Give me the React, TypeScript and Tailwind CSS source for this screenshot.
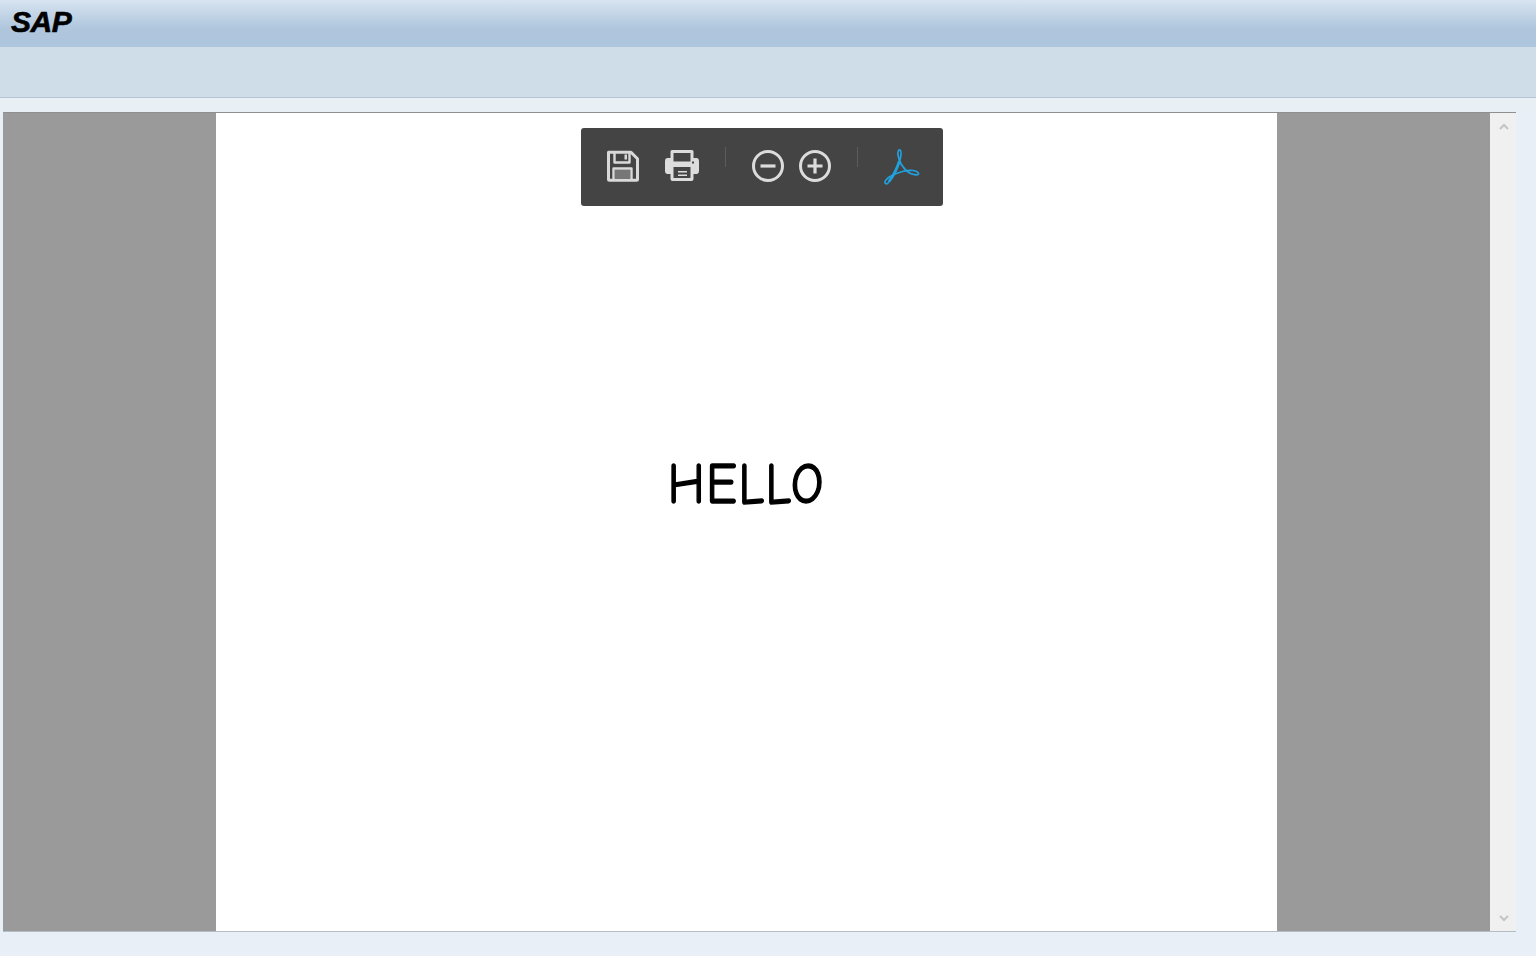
export default function App() {
  return (
    <div className="h-[956px] w-[1536px] overflow-hidden flex flex-col bg-[#e8eff6]" style={{ fontFamily: '"Liberation Sans", sans-serif' }}>
      <header className="h-[47px] shrink-0 flex items-start bg-gradient-to-b from-[#d8e4f0] via-[#afc6dd] via-60% to-[#adc5dd] pl-[11px]">
        <span className="text-[30px] leading-[44px] font-bold italic tracking-[-0.5px] text-black [-webkit-text-stroke:0.6px_black]">SAP</span>
      </header>
      <div className="h-[51px] shrink-0 bg-[#cfdde8] border-b border-[#b4c4d2]" />
      <div className="h-[14px] shrink-0 bg-[#e9f0f5]" />
      <main className="ml-[3px] mr-[20px] h-[820px] flex border-t border-b border-t-[#8f8f8f] border-b-[#b4bcc4] relative">
        <div className="flex-1 flex pl-[213px] bg-[#9a9a9a]">
          <div className="w-[1061px] bg-white flex justify-center relative">
            <span
              className="mt-[337px] h-[70px] text-[51px] leading-[70px] text-black tracking-[1.500px] scale-y-[1.14] [-webkit-text-stroke:1.3px_black]"
              style={{ fontFamily: '"Comic Sans MS", "Comic Neue", "Noto Sans", sans-serif' }}
            >
              HELLO
            </span>
          </div>
        </div>
        <aside className="w-[26px] shrink-0 bg-[#f0f0f0] flex flex-col items-center justify-between pt-[10px] pb-[9px] pl-[1px]">
          <svg width="10" height="8" viewBox="0 0 10 8" fill="none" stroke="#c4c4c4" strokeWidth="2"><path d="M1 6l4-4 4 4" /></svg>
          <svg width="10" height="8" viewBox="0 0 10 8" fill="none" stroke="#c4c4c4" strokeWidth="2"><path d="M1 2l4 4 4-4" /></svg>
        </aside>
        <div className="absolute left-[578px] top-[15px] h-[78px] w-[362px] rounded-[3px] bg-[#444444] flex items-start pt-[21px] pl-[25px]">
          <svg width="34" height="34" viewBox="0 0 34 34" fill="none" stroke="#d9d9d9" strokeWidth="3" strokeLinejoin="round" className="shrink-0">
            <path d="M2.500 3.200h22.500l6.500 6.500v20.500a1 1 0 0 1-1 1h-27a1 1 0 0 1-1-1z" />
            <path d="M8.500 3.500v10h15v-10" strokeWidth="2.400" />
            <rect x="18.500" y="5.500" width="2.500" height="5" fill="#d9d9d9" stroke="none" />
            <path d="M7.500 31v-11.500h18v11.500" strokeWidth="2.400" />
            <rect x="9" y="21" width="15" height="9" fill="#777777" stroke="none" />
          </svg>
          <svg width="36" height="34" viewBox="0 0 36 34" className="ml-[24px] -mt-[1px] shrink-0">
            <path d="M8 2h20a1.500 1.500 0 0 1 1.500 1.500V10h3.500a3 3 0 0 1 2 3v10a3 3 0 0 1-2 3h-3.500v5a2 2 0 0 1-2 2H8.500a2 2 0 0 1-2-2v-5H3a3 3 0 0 1-2-3V13a3 3 0 0 1 2-3h3.500V3.500A1.500 1.500 0 0 1 8 2z" fill="#dcdcdc" />
            <rect x="9.500" y="5" width="17" height="8.500" fill="#444444" />
            <rect x="9.500" y="19" width="17" height="11" fill="#444444" />
            <rect x="14" y="23" width="9" height="1.500" fill="#dcdcdc" />
            <rect x="14" y="26.500" width="9" height="1.500" fill="#dcdcdc" />
            <rect x="28" y="13.500" width="2" height="2" fill="#444444" />
          </svg>
          <div className="ml-[25px] mt-[-2px] w-px h-[20px] bg-[#5c5c5c] shrink-0" />
          <svg width="34" height="34" viewBox="0 0 34 34" fill="none" stroke="#dcdcdc" strokeWidth="3" className="ml-[25px] shrink-0">
            <circle cx="17" cy="17" r="14.500" />
            <path d="M9.500 17h15" strokeWidth="3.200" />
          </svg>
          <svg width="34" height="34" viewBox="0 0 34 34" fill="none" stroke="#dcdcdc" strokeWidth="3" className="ml-[13px] shrink-0">
            <circle cx="17" cy="17" r="14.500" />
            <path d="M9.500 17h15M17 9.500v15" strokeWidth="3.200" />
          </svg>
          <div className="ml-[25px] mt-[-2px] w-px h-[20px] bg-[#5c5c5c] shrink-0" />
          <svg width="38" height="36" viewBox="0 0 38 36" fill="none" stroke="#22a0dc" strokeWidth="1.700" strokeLinejoin="round" className="ml-[24px] shrink-0">
            <path d="M3.500 34.500C1.500 33 5 29 9 27C14 24.500 24 21 31 21.500C35 22 37 24 36.500 25C35.500 26.500 30 26 26 23C21 19 17 12 16 6C15.500 2 17 .5 18 1C19.500 2 19 7 18 11C16 18 10 30 6 34C5 35 4 35 3.500 34.500z" />
            <path d="M7 32.500C10.500 28 15.500 18 17.500 12" strokeWidth="2.800" />
          </svg>
        </div>
      </main>
    </div>
  );
}
